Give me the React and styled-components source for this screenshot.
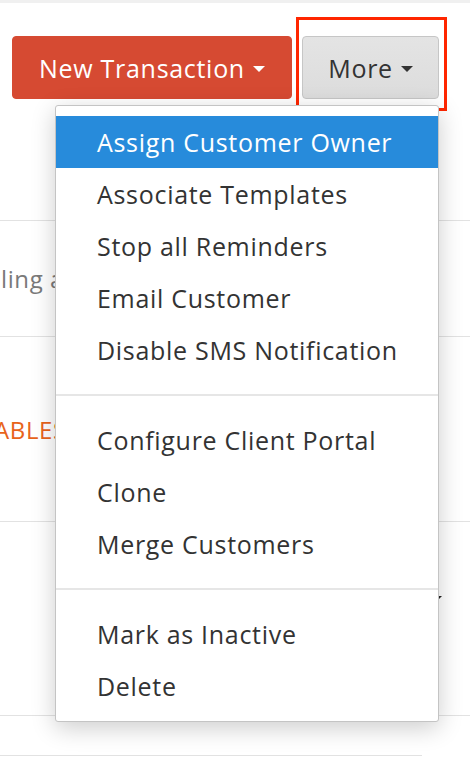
import React from 'react';
import styled, { createGlobalStyle } from 'styled-components';

const GlobalStyle = createGlobalStyle`
  body {
    margin: 0;
    background: #fff;
    font-family: "Open Sans", Lato, "Liberation Sans", sans-serif;
    color: #333;
  }
`;

const Page = styled.div`
  position: relative;
  width: 470px;
  height: 762px;
  overflow: hidden;
  background: #fff;
  border-top: 3px solid #f0f0f0;
  box-sizing: border-box;
`;

const Toolbar = styled.div`
  display: flex;
  align-items: flex-start;
  gap: 10px;
  padding: 33px 0 0 12px;
  height: 218px;
  box-sizing: border-box;
  border-bottom: 1px solid #e2e2e2;
`;

const Button = styled.button`
  display: flex;
  align-items: center;
  justify-content: center;
  gap: 8px;
  width: ${p => p.$w}px;
  height: 63px;
  padding: 0;
  border-radius: 4px;
  font-family: inherit;
  font-size: 25px;
  letter-spacing: 0.7px;
  cursor: pointer;
  background: ${p => (p.$primary ? '#d64a32' : 'linear-gradient(#e4e4e4, #dcdcdc)')};
  color: ${p => (p.$primary ? '#fff' : '#333')};
  border: 1px solid ${p => (p.$primary ? '#d64a32' : '#c6c6c6')};
`;

const Caret = styled.span`
  display: inline-block;
  width: 0;
  height: 0;
  margin-top: 3px;
  border-left: 6px solid transparent;
  border-right: 6px solid transparent;
  border-top: 6px solid ${p => p.$color};
`;

const ActionGroup = styled.div`
  position: relative;
`;

const Highlight = styled.div`
  position: absolute;
  left: -6px;
  top: -19px;
  right: -8px;
  bottom: -12px;
  border: 3px solid #ff2600;
  pointer-events: none;
`;

const Menu = styled.ul`
  position: absolute;
  top: 69px;
  right: 0;
  width: 384px;
  margin: 0;
  padding: 10px 0 9px;
  list-style: none;
  background: #fff;
  border: 1px solid #c4c4c4;
  border-radius: 3px;
  box-sizing: border-box;
  box-shadow: 0 6px 24px rgba(0, 0, 0, 0.2);
  z-index: 10;
`;

const Item = styled.li`
  height: 52px;
  line-height: 52px;
  padding-left: 41px;
  font-size: 25px;
  letter-spacing: 0.7px;
  white-space: nowrap;
  background: ${p => (p.$active ? '#278bdb' : 'transparent')};
  color: ${p => (p.$active ? '#fff' : '#333')};
`;

const Divider = styled.li`
  height: 2px;
  margin: 18px 0;
  background: #e6e6e6;
`;

const Row = styled.div`
  display: flex;
  align-items: center;
  justify-content: ${p => (p.$end ? 'flex-end' : 'flex-start')};
  height: ${p => p.$h}px;
  width: ${p => p.$w || 470}px;
  border-bottom: 1px solid #e2e2e2;
  box-sizing: border-box;
  overflow: hidden;
`;

const RowText = styled.span`
  font-size: 24px;
  letter-spacing: 0.6px;
  color: ${p => p.$color};
  white-space: nowrap;
  margin-left: ${p => p.$offset || 0}px;
`;

const SmallCaret = styled.span`
  align-self: flex-start;
  width: 0;
  height: 0;
  margin: 74px 28px 0 0;
  border-left: 4px solid transparent;
  border-right: 4px solid transparent;
  border-top: 4px solid #222;
`;

const groups = [
  ['Assign Customer Owner', 'Associate Templates', 'Stop all Reminders', 'Email Customer', 'Disable SMS Notification'],
  ['Configure Client Portal', 'Clone', 'Merge Customers'],
  ['Mark as Inactive', 'Delete'],
];

export default function App() {
  return (
    <>
      <GlobalStyle />
      <Page>
        <Toolbar>
          <Button $primary $w={280}>
            New Transaction <Caret $color="#fff" />
          </Button>
          <ActionGroup>
            <Button $w={137}>
              More <Caret $color="#333" />
            </Button>
            <Highlight />
            <Menu>
              {groups.map((g, gi) => (
                <React.Fragment key={gi}>
                  {gi > 0 && <Divider />}
                  {g.map((label, i) => (
                    <Item key={label} $active={gi === 0 && i === 0}>{label}</Item>
                  ))}
                </React.Fragment>
              ))}
            </Menu>
          </ActionGroup>
        </Toolbar>
        <Row $h={116}>
          <RowText $color="#7a7a7a" $offset={1}>ling a</RowText>
        </Row>
        <Row $h={185}>
          <RowText $color="#e8631a" $offset={-6}>ABLES</RowText>
        </Row>
        <Row $h={194} $end>
          <SmallCaret />
        </Row>
        <Row $h={40} $w={422} />
      </Page>
    </>
  );
}
